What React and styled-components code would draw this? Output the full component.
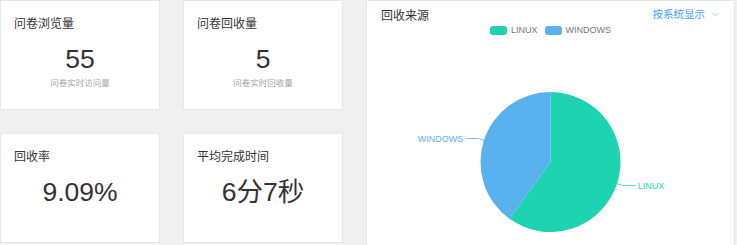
import React from 'react';
import styled, { createGlobalStyle } from 'styled-components';

const GlobalStyle = createGlobalStyle`
	html,
	body {
		margin: 0;
		padding: 0;
		overflow: hidden;
		background: #f0f0f0;
		font-family: 'Liberation Sans', 'Noto Sans CJK SC', sans-serif;
	}
	* {
		box-sizing: border-box;
	}
`;

const Page = styled.div`
	display: flex;
	align-items: flex-start;
	gap: 23px;
	width: 737px;
	height: 245px;
	overflow: hidden;
`;

const StatGrid = styled.div`
	display: grid;
	grid-template-columns: 160px 160px;
	grid-auto-rows: 110px;
	gap: 23px;
`;

const Card = styled.div`
	background: #fff;
	border: 1px solid #e6e6e6;
	padding: 15px 13px 0;
	display: flex;
	flex-direction: column;
`;

const CardTitle = styled.div`
	font-size: 12px;
	line-height: 16px;
	color: #333;
`;

const CardValue = styled.div`
	margin-top: 11px;
	font-size: 26.5px;
	line-height: 32px;
	color: #333;
	text-align: center;
`;

const CardHint = styled.div`
	margin-top: 2px;
	font-size: 8.5px;
	line-height: 12px;
	color: #a3a3a3;
	text-align: center;
`;

const Panel = styled.div`
	width: 369px;
	height: 245px;
	background: #fff;
	border: 1px solid #e6e6e6;
	border-bottom: none;
	display: flex;
	flex-direction: column;
`;

const PanelHeader = styled.div`
	display: flex;
	justify-content: space-between;
	align-items: flex-start;
	height: 23px;
	padding: 7px 15px 0 14px;
`;

const PanelTitle = styled.div`
	font-size: 12px;
	line-height: 16px;
	color: #333;
`;

const Selector = styled.div`
	display: flex;
	align-items: center;
	gap: 7px;
	font-size: 10.5px;
	line-height: 12px;
	color: #409eff;
	cursor: pointer;
`;

const Legend = styled.div`
	display: flex;
	justify-content: center;
	align-items: center;
	gap: 7px;
	height: 10px;
	margin-top: 1px;
`;

const LegendItem = styled.div`
	display: flex;
	align-items: center;
	gap: 4px;
	font-size: 9px;
	line-height: 10px;
	color: #777;
`;

const Swatch = styled.span`
	display: block;
	width: 17px;
	height: 9px;
	border-radius: 3px;
	background: ${(props) => props.color};
`;

const Chart = styled.svg`
	display: block;
	margin-top: 1px;
`;

const stats = [
	{ title: '问卷浏览量', value: '55', hint: '问卷实时访问量' },
	{ title: '问卷回收量', value: '5', hint: '问卷实时回收量' },
	{ title: '回收率', value: '9.09%' },
	{ title: '平均完成时间', value: '6分7秒' },
];

const series = [
	{ name: 'LINUX', value: 3, color: '#1ed4b0' },
	{ name: 'WINDOWS', value: 2, color: '#5ab1ef' },
];

const CX = 183.5;
const CY = 126;
const R = 70;

const point = (deg, r) => {
	const a = (deg * Math.PI) / 180;
	return [CX + r * Math.sin(a), CY - r * Math.cos(a)];
};

const Pie = () => {
	const total = series.reduce((s, e) => s + e.value, 0);
	let start = 0;
	return (
		<Chart width="367" height="208" viewBox="0 0 367 208">
			{series.map((e) => {
				const sweep = (e.value / total) * 360;
				const end = start + sweep;
				const mid = start + sweep / 2;
				const [x1, y1] = point(start, R);
				const [x2, y2] = point(end, R);
				const [ex, ey] = point(mid, R);
				const [ox, oy] = point(mid, R + 6);
				const right = Math.sin((mid * Math.PI) / 180) > 0;
				const hx = right ? ox + 13 : ox - 12;
				const large = sweep > 180 ? 1 : 0;
				start = end;
				return (
					<g key={e.name}>
						<path
							d={`M${CX} ${CY} L${x1} ${y1} A${R} ${R} 0 ${large} 1 ${x2} ${y2} Z`}
							fill={e.color}
						/>
						<polyline
							points={`${ex},${ey} ${ox},${oy} ${hx},${oy}`}
							fill="none"
							stroke={e.color}
							strokeWidth="0.8"
						/>
						<text
							x={right ? hx + 2 : hx - 3}
							y={oy + 3.2}
							fontSize="9"
							fill={e.color}
							textAnchor={right ? 'start' : 'end'}
							fontFamily="'Liberation Sans', sans-serif"
						>
							{e.name}
						</text>
					</g>
				);
			})}
		</Chart>
	);
};

const App = () => {
	return (
		<>
			<GlobalStyle />
			<Page>
				<StatGrid>
					{stats.map((e, index) => (
						<Card key={index}>
							<CardTitle>{e.title}</CardTitle>
							<CardValue>{e.value}</CardValue>
							{e.hint && <CardHint>{e.hint}</CardHint>}
						</Card>
					))}
				</StatGrid>
				<Panel>
					<PanelHeader>
						<PanelTitle>回收来源</PanelTitle>
						<Selector>
							按系统显示
							<svg width="7" height="5" viewBox="0 0 7 5">
								<path d="M0.5 1 L3.5 4 L6.5 1" fill="none" stroke="#c0c4cc" strokeWidth="1" />
							</svg>
						</Selector>
					</PanelHeader>
					<Legend>
						{series.map((e) => (
							<LegendItem key={e.name}>
								<Swatch color={e.color} />
								{e.name}
							</LegendItem>
						))}
					</Legend>
					<Pie />
				</Panel>
			</Page>
		</>
	);
};

export default App;
